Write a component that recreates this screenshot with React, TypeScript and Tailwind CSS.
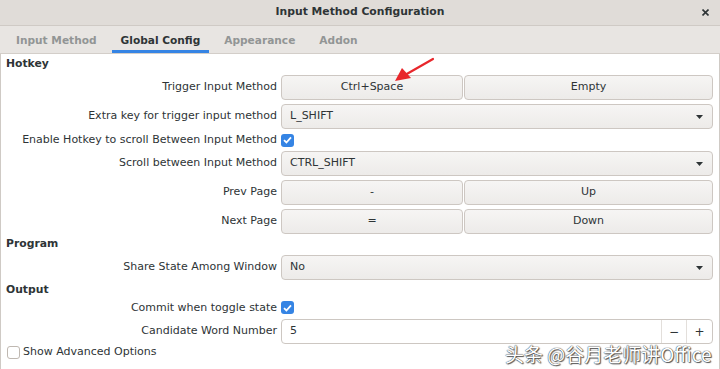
import type { ReactNode } from 'react';

const font = { fontFamily: '"DejaVu Sans", "Noto Sans CJK SC", sans-serif' };

function Label({ children }: { children: ReactNode }) {
  return <div className="w-[276px] shrink-0 text-right">{children}</div>;
}

function SectionHeader({ title, h }: { title: string; h: string }) {
  return (
    <div className={`${h} flex items-center pl-[5px] font-bold text-[10.8px] text-[#2e3436]`}>
      {title}
    </div>
  );
}

function Button({ children, className = '' }: { children: ReactNode; className?: string }) {
  return (
    <div
      className={`h-[25px] flex items-center justify-center rounded-[4px] border border-[#cdc7c2] bg-gradient-to-b from-[#f6f5f4] to-[#edebe9] text-[#2e3436] ${className}`}
    >
      {children}
    </div>
  );
}

function Combo({ value }: { value: string }) {
  return (
    <div className="h-[25px] flex-1 flex items-center justify-between rounded-[4px] border border-[#cdc7c2] bg-gradient-to-b from-[#f6f5f4] to-[#edebe9] pl-[8px] pr-[9px] text-[#2e3436]">
      <span>{value}</span>
      <svg width="7" height="4" viewBox="0 0 7 4">
        <polygon points="0,0 7,0 3.5,4" fill="#2e3436" />
      </svg>
    </div>
  );
}

function Check({ checked }: { checked: boolean }) {
  if (checked)
    return (
      <div className="w-[13px] h-[13px] rounded-[3px] bg-[#3584e4] flex items-center justify-center">
        <svg width="9" height="8" viewBox="0 0 9 8">
          <path d="M1 4.2 L3.4 6.5 L8 1.3" stroke="white" strokeWidth="1.8" fill="none" />
        </svg>
      </div>
    );
  return <div className="w-[13px] h-[13px] rounded-[3px] border border-[#bfb8b1] bg-white" />;
}

function Row({ label, h, children }: { label: string; h: string; children: ReactNode }) {
  return (
    <div className={`${h} flex items-start`}>
      <div className="h-[25px] flex items-center justify-end w-[276px] shrink-0">
        <Label>{label}</Label>
      </div>
      <div className="ml-[4px] mr-[6px] flex-1 flex gap-[1px]">{children}</div>
    </div>
  );
}

export default function App() {
  return (
    <div className="relative w-[720px] h-[369px] overflow-hidden bg-white text-[11px] text-[#2e3436]" style={font}>
      {/* Title bar */}
      <div className="relative h-[26px] border-b border-[#cfcac5] bg-[#e0dcd8] flex items-center justify-center">
        <span className="font-bold text-[10.8px] text-[#2e3436]">Input Method Configuration</span>
        <svg className="absolute right-[11px] top-[9px]" width="7" height="7" viewBox="0 0 7 7">
          <path d="M0.5 0.5 L6.5 6.5 M6.5 0.5 L0.5 6.5" stroke="#2e3436" strokeWidth="1.6" />
        </svg>
      </div>

      {/* Tabs */}
      <div className="h-[28px] border-b border-[#d3cec9] bg-[#e8e5e2] flex items-stretch pl-[7px] gap-[6px] font-bold text-[10.6px]">
        {['Input Method', 'Global Config', 'Appearance', 'Addon'].map((t) => (
          <div
            key={t}
            className={`px-[9px] pt-[5px] flex items-center border-b-[3px] ${
              t === 'Global Config' ? 'border-[#3584e4] text-[#2e3436]' : 'border-transparent text-[#929595]'
            }`}
          >
            {t}
          </div>
        ))}
      </div>

      {/* Content */}
      <div className="border-x border-[#cfcac5] h-full">
        <SectionHeader title="Hotkey" h="h-[21px]" />
        <Row label="Trigger Input Method" h="h-[29px]">
          <Button className="w-[182px]">Ctrl+Space</Button>
          <Button className="flex-1">Empty</Button>
        </Row>
        <Row label="Extra key for trigger input method" h="h-[25px]">
          <Combo value="L_SHIFT" />
        </Row>
        <div className="h-[22px] flex items-center">
          <Label>Enable Hotkey to scroll Between Input Method</Label>
          <div className="ml-[4px]">
            <Check checked />
          </div>
        </div>
        <Row label="Scroll between Input Method" h="h-[29px]">
          <Combo value="CTRL_SHIFT" />
        </Row>
        <Row label="Prev Page" h="h-[29px]">
          <Button className="w-[182px]">-</Button>
          <Button className="flex-1">Up</Button>
        </Row>
        <Row label="Next Page" h="h-[25px]">
          <Button className="w-[182px]">=</Button>
          <Button className="flex-1">Down</Button>
        </Row>
        <SectionHeader title="Program" h="h-[21px]" />
        <Row label="Share State Among Window" h="h-[25px]">
          <Combo value="No" />
        </Row>
        <SectionHeader title="Output" h="h-[21px]" />
        <div className="h-[18px] flex items-start">
          <div className="h-[14px] flex items-center">
            <Label>Commit when toggle state</Label>
          </div>
          <div className="ml-[4px]">
            <Check checked />
          </div>
        </div>
        <Row label="Candidate Word Number" h="h-[25px]">
          <div className="h-[25px] flex-1 flex items-stretch rounded-[4px] border border-[#cdc7c2] bg-white">
            <div className="flex-1 flex items-center pl-[8px]">5</div>
            <div className="w-[25px] border-l border-[#e3dfdb] flex items-center justify-center text-[12px] leading-none">−</div>
            <div className="w-[26px] border-l border-[#e3dfdb] flex items-center justify-center text-[12px] leading-none">+</div>
          </div>
        </Row>
        <div className="h-[17px] flex items-center pl-[6px] gap-[3px]">
          <Check checked={false} />
          <span>Show Advanced Options</span>
        </div>
      </div>

      {/* Red annotation arrow */}
      <svg className="absolute left-0 top-0 pointer-events-none" width="720" height="369">
        <path d="M433 59 L405 75" stroke="#e8262b" strokeWidth="2.2" strokeLinecap="round" />
        <polygon points="395,81 402,68 411,78" fill="#e8262b" />
      </svg>

      {/* Watermark */}
      <div
        className="absolute left-[505px] top-[344px] text-[19px] leading-none text-white whitespace-nowrap [text-shadow:0_0_1px_#444,0_0_1px_#444,1px_1px_1px_#555]"
        style={{ fontFamily: '"Noto Sans CJK SC", sans-serif' }}
      >
        头条 @谷月老师讲Office
      </div>
    </div>
  );
}
